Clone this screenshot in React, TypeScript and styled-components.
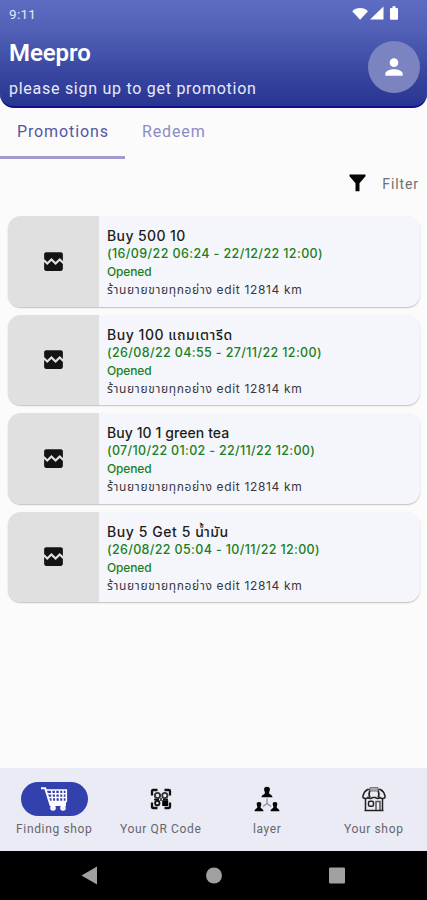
import React from 'react';
import styled, { createGlobalStyle } from 'styled-components';

const Global = createGlobalStyle`
  * { box-sizing: border-box; }
  body { margin: 0; background: #fbfbfc; }
`;

const Screen = styled.div`
  width: 427px;
  height: 900px;
  display: flex;
  flex-direction: column;
  overflow: hidden;
  background: #fbfbfc;
  font-family: Roboto, 'Noto Sans Thai', 'Noto Sans', sans-serif;
`;

const Header = styled.header`
  height: 108px;
  flex: none;
  color: #fff;
  background: linear-gradient(#5e6dc1 0%, #5160b6 30%, #3a48a2 65%, #283592 100%);
  border-bottom: 2px solid #10108a;
  border-radius: 0 0 14px 14px;
`;

const StatusBar = styled.div`
  height: 28px;
  padding: 0 25px 0 9px;
  display: flex;
  justify-content: space-between;
  align-items: center;
`;

const StatusIcons = styled.svg`
  width: 50px;
  height: 18px;
  display: block;
`;

const HeaderRow = styled.div`
  display: flex;
  justify-content: space-between;
  padding: 0 7px 0 9px;
`;

const Titles = styled.div`
  display: flex;
  flex-direction: column;
  padding-top: 9px;
  gap: 9px;
`;

const Avatar = styled.div`
  width: 52px;
  height: 52px;
  margin-top: 13px;
  border-radius: 50%;
  background: #7b84c1;
  display: flex;
  align-items: center;
  justify-content: center;
`;

const Label = styled.span<{ $size: number; $line: number; $spacing?: number; $color?: string; $weight?: number }>`
  display: block;
  white-space: nowrap;
  font-size: ${(p) => p.$size}px;
  line-height: ${(p) => p.$line}px;
  letter-spacing: ${(p) => p.$spacing ?? 0}px;
  color: ${(p) => p.$color ?? 'inherit'};
  font-weight: ${(p) => p.$weight ?? 400};
`;

const Tabs = styled.nav`
  display: flex;
  height: 51px;
  flex: none;
`;

const Tab = styled.div<{ $active?: boolean }>`
  padding: 14px 17px 0;
  width: 125px;
  border-bottom: 3px solid ${(p) => (p.$active ? '#a09cce' : 'transparent')};
`;

const FilterRow = styled.div`
  height: 57px;
  flex: none;
  display: flex;
  justify-content: flex-end;
  align-items: flex-start;
  padding: 15px 8px 0 0;
  gap: 16px;
`;

const CardList = styled.main`
  flex: 1;
  display: flex;
  flex-direction: column;
  gap: 8px;
  padding: 0 7px 0 8px;
`;

const Card = styled.article`
  height: 90.5px;
  flex: none;
  display: flex;
  overflow: hidden;
  border-radius: 13px;
  background: #f5f6fb;
  box-shadow: 0 1px 1.5px rgba(0, 0, 0, 0.24);
`;

const Thumb = styled.div`
  width: 91px;
  background: #e0e0e0;
  display: flex;
  align-items: center;
  justify-content: center;
`;

const CardBody = styled.div`
  font-family: Inter, 'Noto Sans Thai', 'Noto Sans', sans-serif;
  padding: 11px 0 0 8px;
`;

const BottomNav = styled.nav`
  height: 83px;
  flex: none;
  display: grid;
  grid-template-columns: repeat(4, 1fr);
  padding-left: 1px;
  background: #ebebf5;
`;

const NavItem = styled.div`
  display: flex;
  flex-direction: column;
  align-items: center;
  padding-top: 14px;
  gap: 5px;
`;

const Pill = styled.div<{ $active?: boolean }>`
  width: 67px;
  height: 34px;
  border-radius: 17px;
  display: flex;
  align-items: center;
  justify-content: center;
  background: ${(p) => (p.$active ? '#3341ae' : 'transparent')};
`;

const SystemBar = styled.div`
  height: 49px;
  flex: none;
  background: #000;
  display: flex;
  justify-content: center;
`;

const BrokenImage = () => (
  <svg width="25" height="25" viewBox="0 0 24 24" fill="#141414">
    <path d="M21 5v6.59l-3-3.01-4 4.01-4-4-4 4-3-3.01V5c0-1.1.9-2 2-2h14c1.1 0 2 .9 2 2zm-3 6.42l3 3.01V19c0 1.1-.9 2-2 2H5c-1.1 0-2-.9-2-2v-6.58l3 2.99 4-4 4 4 4-3.99z" />
  </svg>
);

const CartIcon = () => (
  <svg width="30" height="26" viewBox="0 0 30 26" fill="none" stroke="#fff">
    <path d="M2 2.200h4.200L11.500 19h15.500" strokeWidth="2" />
    <path d="M7 4h20.300v11.500H10.500" strokeWidth="1.600" />
    <path d="M8 7.800h19M9.500 11.600h17.500M12.500 4l1 11.500M16.500 4l.4 11.500M20.500 4v11.500M24 4v11.500" strokeWidth="1.500" />
    <path d="M11 17.200h16" strokeWidth="2.600" />
    <circle cx="14" cy="22" r="1.600" strokeWidth="2.400" />
    <circle cx="24" cy="22" r="1.600" strokeWidth="2.400" />
  </svg>
);

const QrIcon = () => (
  <svg width="22" height="22" viewBox="0 0 22 22" fill="none" stroke="#111" strokeWidth="1.900">
    <path d="M2 7.500V3q0-1 1-1h4.500M14.500 2H19q1 0 1 1v4.500M20 14.500V19q0 1-1 1h-4.500M7.500 20H3q-1 0-1-1v-4.500" strokeWidth="2.300" />
    <circle cx="7.500" cy="7.500" r="2.600" stroke="#333" />
    <circle cx="14.800" cy="7.500" r="2.600" stroke="#333" />
    <rect x="5.200" y="13" width="4.200" height="4.200" rx="1.200" />
    <path d="M12.200 12.200h6V18h-6z" fill="#000" stroke="none" />
    <path d="M11 10v3M4 11.500h5M13 11.500h5" strokeWidth="1.400" />
  </svg>
);

const LayerIcon = () => (
  <svg width="26" height="26" viewBox="0 0 26 26" fill="#050505">
    <path d="M13 .8c2 0 3 1 2.900 2.700-.1 1.500-.8 2.300-.8 3.500 0 1.500 3.200 1.600 3.400 4.200h-11c.2-2.600 3.400-2.700 3.400-4.200 0-1.200-.7-2-.8-3.500C10 1.800 11 .8 13 .8z" />
    <path d="M5 16c1.700 0 2.400.9 2.300 2.300-.1 1.200-.7 1.900-.7 3 .1 1.300 2.700 1.400 2.900 3.900h-9c.2-2.500 2.700-2.600 2.800-3.900 0-1.100-.5-1.800-.6-3C2.600 16.900 3.300 16 5 16zM21 16c1.700 0 2.400.9 2.300 2.300-.1 1.200-.6 1.900-.6 3 .1 1.300 2.600 1.400 2.800 3.900h-9c.2-2.500 2.800-2.600 2.900-3.900 0-1.100-.6-1.800-.7-3-.1-1.400.6-2.300 2.300-2.300z" />
    <path d="M13 12.500V18M13 17.500l-4 3M13 17.500l4 3" fill="none" stroke="#8b8b90" strokeWidth="1.200" />
  </svg>
);

const ShopIcon = () => (
  <svg width="26" height="26" viewBox="0 0 26 26" fill="none" stroke="#222" strokeWidth="1.500">
    <path d="M6.500 3.500h13q3.500 2 4.500 6.500v1.500c-1 1.300-4 1.300-5 0-1 1.300-3.500 1.300-4.500 0h-3c-1 1.300-3.500 1.300-4.500 0-1 1.300-4 1.300-5 0V10q1-4.500 4.500-6.500z" />
    <path d="M9.500 4Q7 7.500 9 11.500M16.500 4q2.500 3.500.5 7.500" strokeWidth="1.700" />
    <path d="M9 1.500h8v3.500H9z" fill="#aaa" stroke="#777" strokeWidth="1" />
    <path d="M4.500 13v11.500h17V13M3.500 24.500h19" />
    <rect x="7.500" y="15.200" width="5" height="5" rx="1.500" />
    <path d="M15 24v-8.500h4V24" stroke="#555" />
  </svg>
);

const promotions = [
  { title: 'Buy 500 10', period: '(16/09/22 06:24 - 22/12/22 12:00)', spacing: 0.4, periodSpacing: 0.39 },
  { title: 'Buy 100 แถมเตารีด', period: '(26/08/22 04:55 - 27/11/22 12:00)', spacing: 0.54, periodSpacing: 0.37 },
  { title: 'Buy 10 1 green tea', period: '(07/10/22 01:02 - 22/11/22 12:00)', spacing: 0.08, periodSpacing: 0.33 },
  { title: 'Buy 5 Get 5 น้ำมัน', period: '(26/08/22 05:04 - 10/11/22 12:00)', spacing: 0.57, periodSpacing: 0.35 },
];

const navItems = [
  { label: 'Finding shop', icon: <CartIcon />, active: true },
  { label: 'Your QR Code', icon: <QrIcon /> },
  { label: 'layer', icon: <LayerIcon /> },
  { label: 'Your shop', icon: <ShopIcon /> },
];

export default function App() {
  return (
    <Screen>
      <Global />
      <Header>
        <StatusBar>
          <Label $size={13.500} $line={28} $spacing={0.3} $color="#e4e7f8">9:11</Label>
          <StatusIcons viewBox="0 0 50 18" fill="#fff">
            <path d="M.2 6.200C4.500 1.800 11.700 1.800 16 6.200L8.100 14.800z" />
            <path d="M31.500 1.500v13H18z" />
            <path d="M39 3h1.500V1.300h3V3H45q1 0 1 1v9.700q0 1-1 1h-6q-1 0-1-1V4q0-1 1-1z" />
          </StatusIcons>
        </StatusBar>
        <HeaderRow>
          <Titles>
            <Label $size={24} $line={32} $spacing={-0.1} $weight={600}>Meepro</Label>
            <Label $size={16} $line={22} $spacing={0.73} $color="#e8eaf8">please sign up to get promotion</Label>
          </Titles>
          <Avatar>
            <svg width="26" height="26" viewBox="0 0 24 24" fill="#fff">
              <path d="M12 12c2.210 0 4-1.790 4-4s-1.790-4-4-4-4 1.790-4 4 1.790 4 4 4zm0 2c-2.670 0-8 1.340-8 4v2h16v-2c0-2.660-5.330-4-8-4z" />
            </svg>
          </Avatar>
        </HeaderRow>
      </Header>
      <Tabs>
        <Tab $active>
          <Label $size={16} $line={20} $spacing={0.88} $color="#5356a5">Promotions</Label>
        </Tab>
        <Tab>
          <Label $size={16} $line={20} $spacing={0.88} $color="#8a8dc4">Redeem</Label>
        </Tab>
      </Tabs>
      <FilterRow>
        <svg width="17" height="18" viewBox="0 0 17 18">
          <path d="M.5.5h16v1.800l-6 7v8H6.500v-8l-6-7z" fill="#050505" />
        </svg>
        <Label $size={14} $line={20} $spacing={0.9} $color="#6f6f74">Filter</Label>
      </FilterRow>
      <CardList>
        {promotions.map((p) => (
          <Card key={p.title}>
            <Thumb><BrokenImage /></Thumb>
            <CardBody>
              <Label $size={14} $line={18} $spacing={p.spacing} $weight={500} $color="#1d1d20">{p.title}</Label>
              <Label $size={12.500} $line={18} $spacing={p.periodSpacing} $weight={450} $color="#1b7f22">{p.period}</Label>
              <Label $size={12} $line={17} $spacing={-0.15} $weight={500} $color="#1b7f22">Opened</Label>
              <Label $size={12} $line={19} $spacing={0.66} $color="#38383c">ร้านยายขายทุกอย่าง edit 12814 km</Label>
            </CardBody>
          </Card>
        ))}
      </CardList>
      <BottomNav>
        {navItems.map((n) => (
          <NavItem key={n.label}>
            <Pill $active={n.active}>{n.icon}</Pill>
            <Label $size={12} $line={16} $spacing={0.65} $color="#65656c">{n.label}</Label>
          </NavItem>
        ))}
      </BottomNav>
      <SystemBar>
        <svg width="427" height="49" viewBox="0 0 427 49" fill="#a0a0a0">
          <path d="M81.500 24.500L97 15.500v18z" />
          <circle cx="214" cy="24.500" r="8" />
          <rect x="329" y="16.500" width="16" height="16" rx="1" />
        </svg>
      </SystemBar>
    </Screen>
  );
}
